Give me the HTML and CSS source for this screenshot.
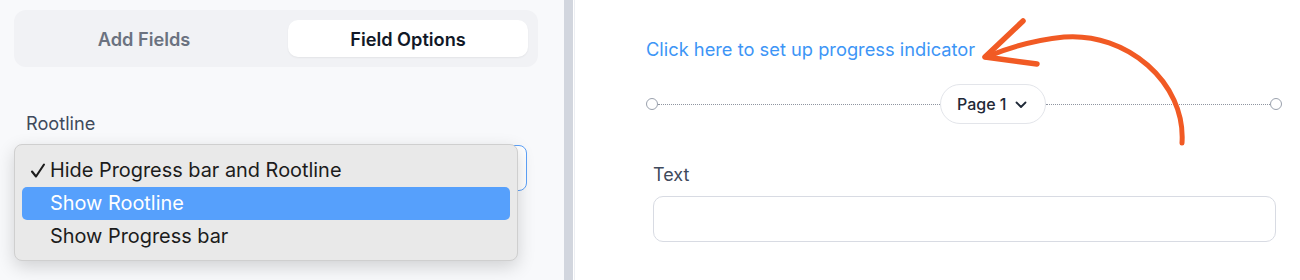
FILE: index.html
```html
<!DOCTYPE html>
<html>
<head>
<meta charset="utf-8">
<link rel="stylesheet" href="styles.css">
</head>
<body>
<div class="page">
  <aside class="sidebar">
    <div class="tabs">
      <div class="tab">Add Fields</div>
      <div class="tab active">Field Options</div>
    </div>
    <div class="field">
      <div class="label">Rootline</div>
      <div class="select"></div>
      <div class="menu">
        <div class="item"><svg class="check" width="16" height="16" viewBox="0 0 16 16"><path d="M2 8.5 L6 13.5 L14 1.5" fill="none" stroke="#1c1c1c" stroke-width="2.1" stroke-linecap="round" stroke-linejoin="round"/></svg>Hide Progress bar and Rootline</div>
        <div class="item hl">Show Rootline</div>
        <div class="item">Show Progress bar</div>
      </div>
    </div>
  </aside>
  <div class="scroll"><div class="thumb"></div></div>
  <main class="canvas">
    <a class="setup">Click here to set up progress indicator</a>
    <div class="rootline">
      <span class="dot"></span>
      <span class="dash first"></span>
      <div class="pagepill">Page 1
        <svg class="chev" width="12" height="8" viewBox="0 0 12 8"><path d="M1.5 1.5 L6 6 L10.5 1.5" fill="none" stroke="#1f2937" stroke-width="1.8" stroke-linecap="round" stroke-linejoin="round"/></svg>
      </div>
      <span class="dash rest"></span>
      <span class="dot"></span>
    </div>
    <div class="textfield">
      <div class="tlabel">Text</div>
      <div class="input"></div>
    </div>
  </main>
  <svg class="arrow" width="1300" height="280" viewBox="0 0 1300 280">
    <path d="M1182 143 C1186 82 1126 32 1064 37 C1034 40 1008 48 986 57" fill="none" stroke="#f15a24" stroke-width="5" stroke-linecap="round"/>
    <path d="M1023 21 L985 57 L1037 64" fill="none" stroke="#f15a24" stroke-width="5.5" stroke-linecap="round" stroke-linejoin="round"/>
  </svg>
</div>
</body>
</html>
```

FILE: styles.css
```css
* { box-sizing: border-box; }
html, body { margin: 0; padding: 0; background: #fff; }
body { font-family: Inter, "Noto Sans", sans-serif; -webkit-font-smoothing: antialiased; }
.page { position: relative; display: flex; width: 1300px; height: 280px; overflow: hidden; }

.sidebar { width: 564px; flex: none; background: #f8f9fb; padding: 10px 26px 0 14px; }
.tabs { display: grid; grid-template-columns: 1fr 1fr; gap: 24px; background: #f1f2f5; border-radius: 12px; padding: 10px; height: 57px; }
.tab { display: flex; align-items: center; justify-content: center; font-size: 18.2px; font-weight: 600; color: #6b7280; border-radius: 10px; }
.tab.active { background: #fff; color: #111827; box-shadow: 0 1px 2px rgba(0,0,0,0.06); }

.field { position: relative; margin-top: 45px; padding-left: 12px; }
.label { font-size: 18.2px; color: #3f4a5c; line-height: 22px; }
.select { margin-top: 11px; width: 501px; height: 46px; border: 1px solid #5ea2f8; border-radius: 8px; background: #fff; }
.menu { position: absolute; left: 0; top: 32px; width: 504px; height: 117px; background: #e9e9e9; border: 1px solid #cfcfcf; border-radius: 8px; box-shadow: 0 6px 18px rgba(0,0,0,0.16); padding: 9px 7px 0 7px; }
.item { position: relative; height: 33px; line-height: 33px; padding-left: 28px; font-size: 19.9px; color: #1c1c1c; border-radius: 5px; }
.item.hl { background: #56a0fc; color: #fff; }
.check { position: absolute; left: 8px; top: 9px; }

.scroll { width: 12px; flex: none; display: flex; background: #fff; }
.thumb { width: 9px; background: #d2d6de; }
.scroll::after { content: ""; width: 1px; margin-left: 1px; background: #eceef2; }

.canvas { flex: 1; padding: 38px 18px 0 70px; }
.setup { display: block; font-size: 18.3px; color: #3d95f6; line-height: 22px; }
.rootline { display: flex; align-items: center; margin-top: 24px; height: 40px; }
.dot { width: 12px; height: 12px; border: 1.5px solid #9aa1ad; border-radius: 50%; flex: none; }
.dash { height: 0; border-top: 1.5px dotted #8f95a0; }
.dash.first { width: 282px; flex: none; }
.dash.rest { flex: 1; }
.pagepill { display: flex; align-items: center; gap: 8px; height: 40px; padding: 0 18px 0 16px; border: 1px solid #e3e5ea; border-radius: 20px; font-size: 16px; font-weight: 500; color: #1f2937; background: #fff; }
.chev { margin-top: 2px; }

.textfield { margin-top: 40px; padding-left: 7px; }
.tlabel { font-size: 18px; color: #3f4a5c; line-height: 22px; }
.input { margin-top: 10px; width: 623px; height: 46px; border: 1px solid #d8dbe3; border-radius: 10px; }

.arrow { position: absolute; left: 0; top: 0; pointer-events: none; }
```
